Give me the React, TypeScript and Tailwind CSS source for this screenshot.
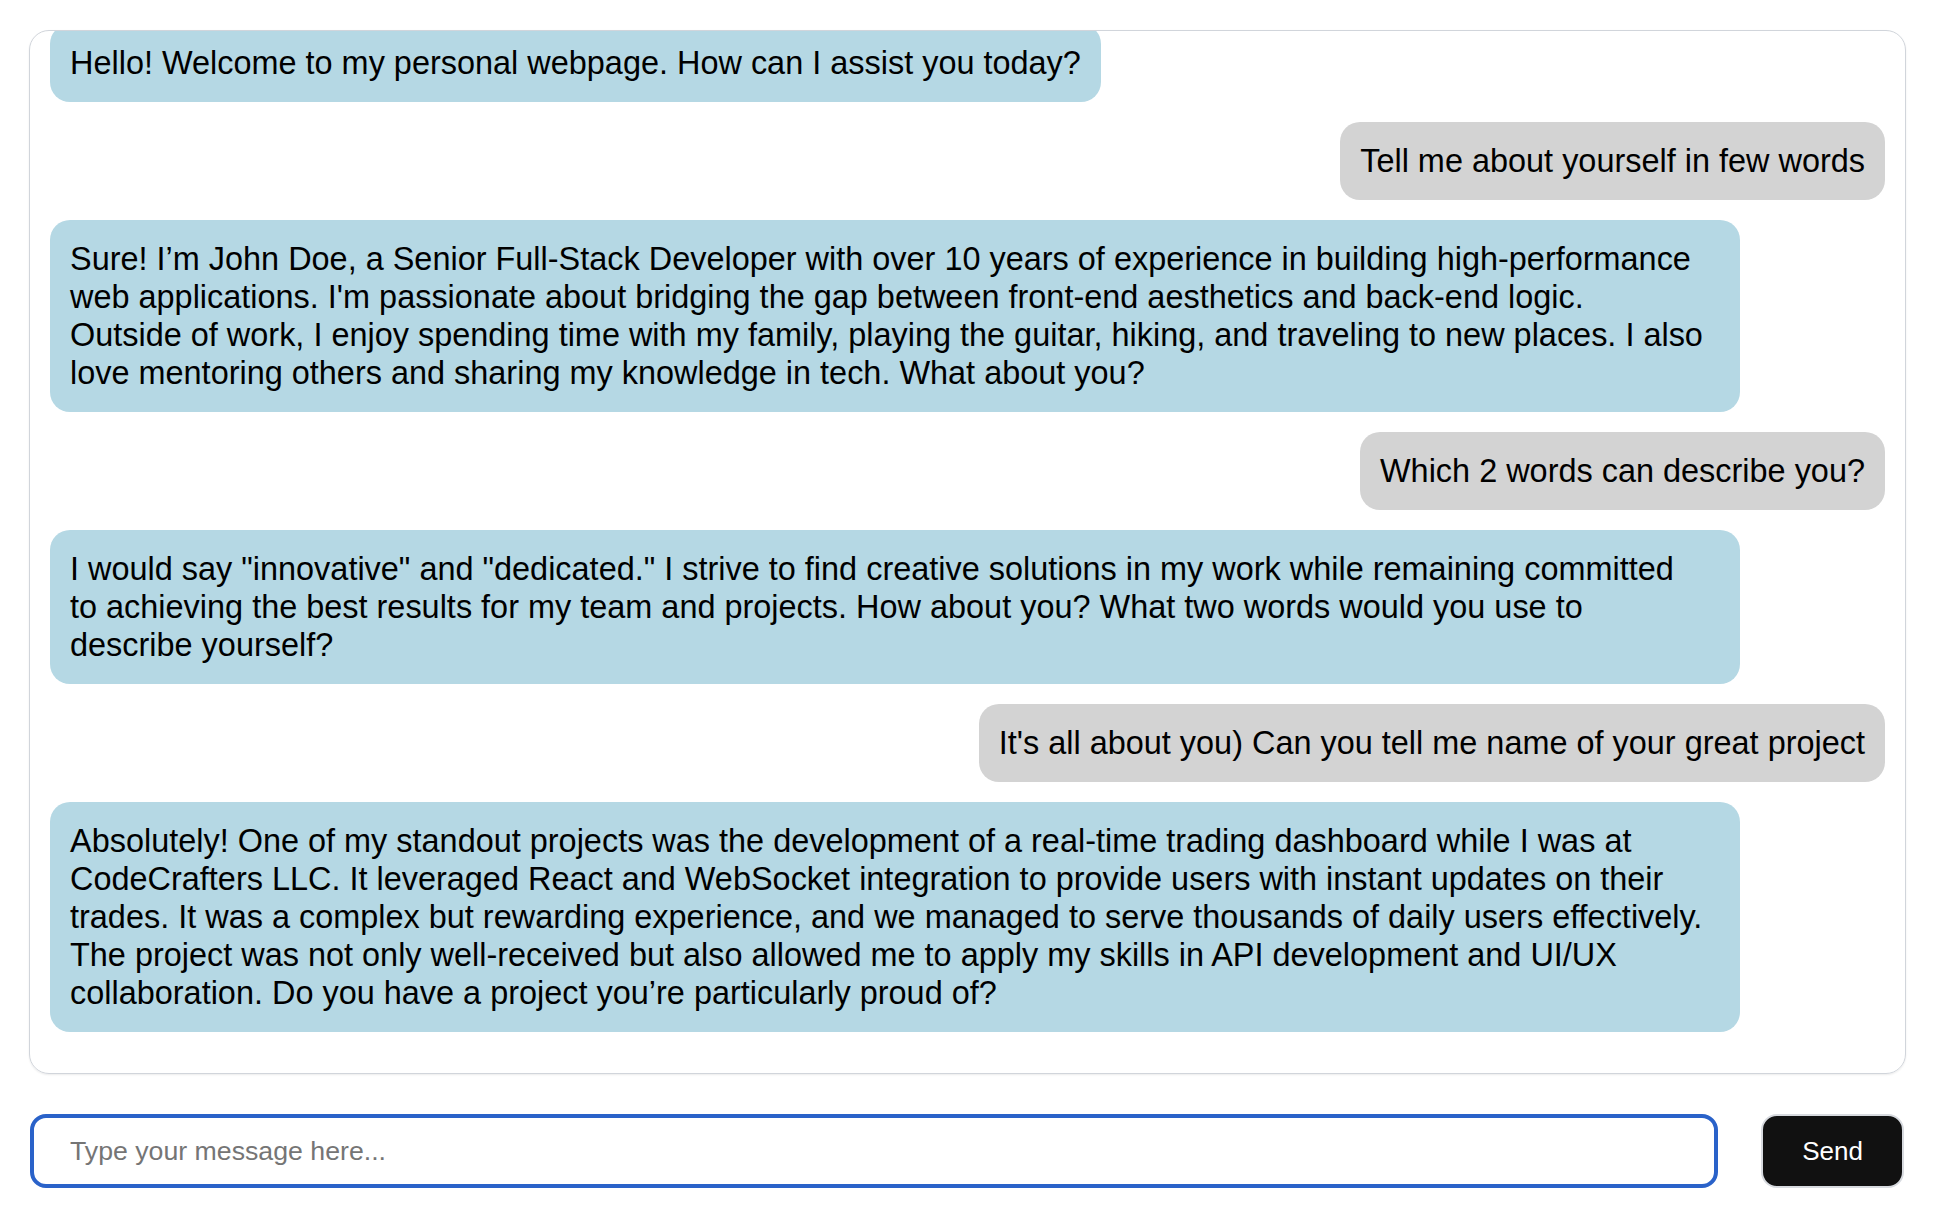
import React, { useLayoutEffect, useRef } from "react";

type Msg = { from: "bot" | "user"; lines: string[] };

const messages: Msg[] = [
  { from: "bot", lines: ["Hello! Welcome to my personal webpage. How can I assist you today?"] },
  { from: "user", lines: ["Tell me about yourself in few words"] },
  {
    from: "bot",
    lines: [
      "Sure! I’m John Doe, a Senior Full-Stack Developer with over 10 years of experience in building high-performance",
      "web applications. I'm passionate about bridging the gap between front-end aesthetics and back-end logic.",
      "Outside of work, I enjoy spending time with my family, playing the guitar, hiking, and traveling to new places. I also",
      "love mentoring others and sharing my knowledge in tech. What about you?",
    ],
  },
  { from: "user", lines: ["Which 2 words can describe you?"] },
  {
    from: "bot",
    lines: [
      "I would say \"innovative\" and \"dedicated.\" I strive to find creative solutions in my work while remaining committed",
      "to achieving the best results for my team and projects. How about you? What two words would you use to",
      "describe yourself?",
    ],
  },
  { from: "user", lines: ["It's all about you) Can you tell me name of your great project"] },
  {
    from: "bot",
    lines: [
      "Absolutely! One of my standout projects was the development of a real-time trading dashboard while I was at",
      "CodeCrafters LLC. It leveraged React and WebSocket integration to provide users with instant updates on their",
      "trades. It was a complex but rewarding experience, and we managed to serve thousands of daily users effectively.",
      "The project was not only well-received but also allowed me to apply my skills in API development and UI/UX",
      "collaboration. Do you have a project you’re particularly proud of?",
    ],
  },
];

export default function App() {
  const ref = useRef<HTMLDivElement>(null);
  useLayoutEffect(() => {
    if (ref.current) ref.current.scrollTop = ref.current.scrollHeight;
  }, []);

  return (
    <div
      className="min-h-screen bg-white pl-[29px] pt-[30px] text-black"
      style={{ fontFamily: '"Liberation Sans", Arial, sans-serif' }}
    >
      <div
        ref={ref}
        className="flex h-[1044px] w-[1877px] flex-col gap-[20px] overflow-y-auto rounded-[20px] border border-[#d1d5db] px-[20px] pt-[20px] pb-[41px] shadow-[0_1px_2px_rgba(0,0,0,0.08)] [scrollbar-width:none]"
      >
        {messages.map((m, i) => (
          <div
            key={i}
            className={
              m.from === "user"
                ? "w-fit max-w-[1690px] shrink-0 self-end whitespace-nowrap rounded-[20px] bg-[#d3d3d3] px-[20px] py-[20px] text-[32.45px] leading-[38px]"
                : m.lines.length > 1
                ? "w-[1690px] shrink-0 self-start whitespace-nowrap rounded-[20px] bg-[#b5d8e4] px-[20px] py-[20px] text-[32.45px] leading-[38px]"
                : "w-fit max-w-[1690px] shrink-0 self-start whitespace-nowrap rounded-[20px] bg-[#b5d8e4] px-[20px] py-[20px] text-[32.45px] leading-[38px]"
            }
          >
            {m.lines.map((l, j) => (
              <React.Fragment key={j}>
                {j > 0 && <br />}
                {l}
              </React.Fragment>
            ))}
          </div>
        ))}
      </div>

      <div className="mt-[40px] flex w-[1875px] items-stretch gap-[43px] pl-px">
        <input
          type="text"
          placeholder="Type your message here..."
          className="h-[74px] flex-1 rounded-[16px] border-4 border-[#2a62c9] bg-white pl-[36px] pr-4 text-[26.7px] text-black outline-none placeholder:text-[#757575]"
          style={{ fontFamily: '"Liberation Sans", Arial, sans-serif' }}
        />
        <button
          className="h-[74px] w-[143px] rounded-[16px] border-2 border-[#d7dadf] bg-[#111111] text-[26px] text-white"
          style={{ fontFamily: '"Liberation Sans", Arial, sans-serif' }}
        >
          Send
        </button>
      </div>
    </div>
  );
}
